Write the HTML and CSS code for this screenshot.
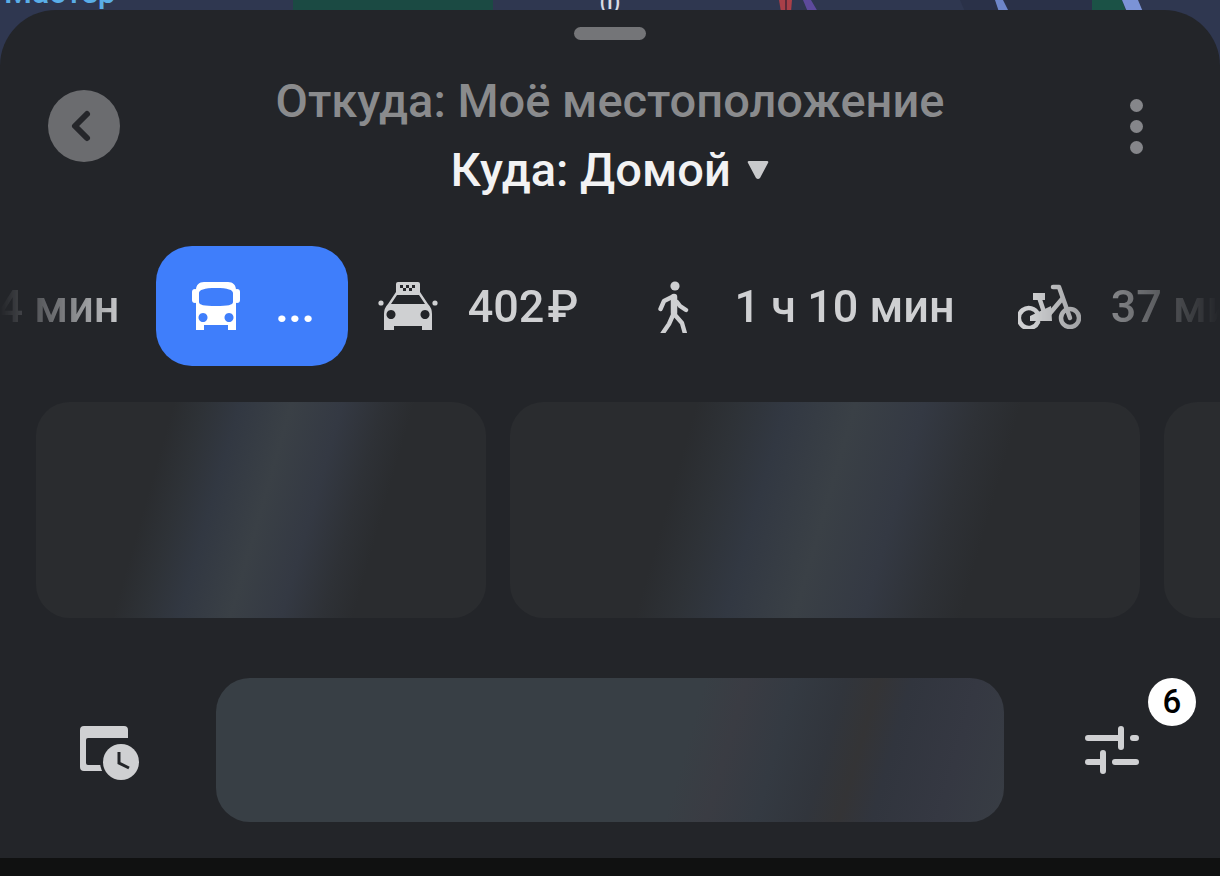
FILE: index.html
```html
<!DOCTYPE html>
<html lang="ru">
<head>
  <meta charset="UTF-8">
  <title>Маршрут</title>
  <link rel="stylesheet" href="styles.css">
</head>
<body>

<!-- кусок карты над шторкой -->
<svg class="map" viewBox="0 0 1220 70" width="1220" height="70">
  <rect width="1220" height="70" fill="#2f3750"/>
  <rect x="293" width="200" height="70" fill="#1b4a43"/>
  <path d="M960 0H1092V70H990Z" fill="#2a3148"/>
  <path d="M1092 0H1122L1126 12V70H1092Z" fill="#1b5246"/>
  <path d="M779 0H792L791 12H781Z" fill="#a83f48"/>
  <rect x="785" width="2" height="12" fill="#5c2a3a"/>
  <path d="M803 0H811L818 12H808Z" fill="#5d4a9c"/>
  <path d="M995 0H1003L1009 12H999Z" fill="#6e86c9"/>
  <path d="M1122 0H1138L1143 12H1127Z" fill="#7b93d6"/>
  <text class="map-label" x="4" y="3">Мастер</text>
  <text class="map-glyph" x="610" y="9">(ı)</text>
</svg>

<div class="sheet">
  <div class="handle"></div>

  <div class="head">
    <button class="back">
      <svg viewBox="0 0 72 72" width="72" height="72"><path d="M39 24 27 36l12 12" fill="none" stroke="#25262a" stroke-width="6" stroke-linecap="round" stroke-linejoin="round"/></svg>
    </button>
    <div class="route">
      <div class="from">Откуда: Моё местоположение</div>
      <div class="to">Куда: Домой
        <svg class="caret" viewBox="0 0 22 20" width="22" height="20"><path d="M2 1h18q2 0 1 2l-8 15q-2 2-4 0L1 3Q0 1 2 1z" fill="#c9cacc"/></svg>
      </div>
    </div>
    <button class="more"><span></span><span></span><span></span></button>
  </div>

  <div class="tabs">
    <div class="tab tab-first"><span>34 мин</span></div>

    <div class="tab active">
      <svg viewBox="0 0 48 48" width="48" height="48" fill="#fff">
        <rect x="0" y="7" width="6" height="14" rx="3"/>
        <rect x="42" y="7" width="6" height="14" rx="3"/>
        <path fill-rule="evenodd" d="M4 8C4 3 7 0 12 0H36C41 0 44 3 44 8V48H36V43H12V48H4ZM7 20V11C7 8 12 6 24 6S41 8 41 11V20C41 23 36 24 24 24S7 23 7 20ZM11 31a4.500 4.500 0 1 0 .01 0ZM37 31a4.500 4.500 0 1 0 .01 0Z"/>
      </svg>
      <span>...</span>
    </div>

    <div class="tab tab-taxi">
      <svg viewBox="0 0 60 48" width="60" height="48" fill="#cfd0d2">
        <path d="M20 0H40Q42 0 42 2V10H18V2Q18 0 20 0Z"/>
        <path fill="#25262a" d="M22 3h3v3h-3zM28 3h3v3h-3zM34 3h3v3h-3zM25 6h3v3h-3zM31 6h3v3h-3z"/>
        <path fill-rule="evenodd" d="M18 10H42L50 22Q54 26 54 32V48H44V44H16V48H6V32Q6 26 10 22ZM19 13 13 22H47L41 13ZM13 28a4.500 4.500 0 1 0 .01 0ZM47 28a4.500 4.500 0 1 0 .01 0Z"/>
        <circle cx="3" cy="21" r="2.600"/>
        <circle cx="57" cy="21" r="2.600"/>
      </svg>
      <span class="price">402 ₽</span>
    </div>

    <div class="tab">
      <svg viewBox="-13 -3 60 54" width="60" height="54" fill="none" stroke="#cfd0d2" stroke-width="4.400" stroke-linecap="round" stroke-linejoin="round">
        <circle cx="17" cy="4" r="4.600" fill="#cfd0d2" stroke="none"/>
        <path stroke-width="6.500" d="M16 15 16 31"/>
        <path d="M14 15 6 19 2.500 27M19 20 22 24 28 28M15 33 11 42 4.500 51.500M17 33 24 41 27 51.500"/>
      </svg>
      <span>1 ч 10 мин</span>
    </div>

    <div class="tab tab-bike">
      <svg viewBox="0 0 63 45" width="63" height="45" fill="none" stroke="#cfd0d2" stroke-width="4.500" stroke-linecap="round" stroke-linejoin="round">
        <path d="M20 30A10 10 0 1 0 20 38"/>
        <circle cx="52" cy="34" r="9"/>
        <path d="M35 3H41L52 34"/>
        <path d="M21 13 28 34 44 15"/>
        <path fill="#cfd0d2" stroke="none" d="M15 9H27V16H15ZM12 32 33 22 34 37H12Z"/>
      </svg>
      <span>37 мин</span>
    </div>
  </div>

  <div class="cards">
    <div class="card card-s"></div>
    <div class="card card-l"></div>
    <div class="card card-s"></div>
  </div>

  <div class="foot">
    <div class="foot-icon history">
      <svg viewBox="0 0 60 54" width="60" height="54">
        <path fill="#cfd0d2" d="M4 0H44Q48 0 48 4V12H8Q6 12 6 14V37Q6 39 8 39H24V45H4Q0 45 0 41V4Q0 0 4 0Z"/>
        <circle cx="41" cy="36" r="21" fill="#232529"/>
        <circle cx="41" cy="36" r="18" fill="#cfd0d2"/>
        <path d="M39 26V37L49 42" fill="none" stroke="#232529" stroke-width="3"/>
      </svg>
    </div>
    <div class="go"></div>
    <div class="foot-icon filter">
      <svg viewBox="0 0 54 48" width="54" height="48" fill="none" stroke="#cfd0d2" stroke-width="6" stroke-linecap="round">
        <path d="M3 12H33M36 3V21M48 12H51M3 36H15M18 27V45M30 36H51"/>
      </svg>
      <div class="badge">6</div>
    </div>
  </div>
</div>

</body>
</html>
```

FILE: styles.css
```css
* {
  box-sizing: border-box;
}
html, body {
  margin: 0;
  height: 876px;
  overflow: hidden;
}
body {
  position: relative;
  background-color: #101111;
  font-family: "Roboto", "Noto Sans", sans-serif;
}
button {
  border: none;
  padding: 0;
  background: none;
}
.map {
  position: absolute;
  top: 0;
  left: 0;
  display: block;
}
.map-label {
  font-size: 32px;
  font-weight: 500;
  fill: #5aaee8;
}
.map-glyph {
  font-size: 22px;
  font-weight: 500;
  fill: #d8dbe4;
  text-anchor: middle;
}
.sheet {
  position: relative;
  margin-top: 10px;
  height: 848px;
  padding-top: 17px;
  background-color: #232529;
  border-radius: 56px 56px 0 0;
}
.handle {
  width: 72px;
  height: 13px;
  margin: 0 auto;
  border-radius: 7px;
  background-color: #747578;
}
.head {
  display: grid;
  grid-template-columns: 72px 1fr 72px;
  margin-top: 26px;
  padding: 0 48px;
}
.back {
  width: 72px;
  height: 72px;
  margin-top: 24px;
  border-radius: 50%;
  background-color: #6b6c6f;
}
.back svg {
  display: block;
}
.route {
  text-align: center;
  font-size: 47px;
  line-height: 69px;
  font-weight: 500;
}
.from {
  color: #8a8b8d;
}
.to {
  color: #f2f2f3;
}
.caret {
  margin-left: 5px;
  vertical-align: 6px;
}
.more {
  display: flex;
  flex-direction: column;
  align-items: center;
  gap: 8px;
  margin-top: 33px;
}
.more span {
  width: 13px;
  height: 13px;
  border-radius: 50%;
  background-color: #85868a;
}
.tabs {
  display: flex;
  gap: 6px;
  height: 120px;
  margin-top: 42px;
  overflow: hidden;
  -webkit-mask-image: linear-gradient(90deg, transparent 0, #000 125px, #000 1030px, transparent 1220px);
  mask-image: linear-gradient(90deg, transparent 0, #000 125px, #000 1030px, transparent 1220px);
}
.tab {
  flex: none;
  display: flex;
  align-items: center;
  gap: 30px;
  padding: 0 30px;
  font-size: 45px;
  font-weight: 500;
  color: #cfd0d2;
  white-space: nowrap;
}
.tab-first {
  margin-left: -58px;
}
.tab-taxi {
  padding-left: 24px;
}
.tab-bike {
  padding-left: 27px;
}
.price {
  word-spacing: -8px;
}
.active {
  gap: 36px;
  padding: 0 33px 0 36px;
  border-radius: 36px;
  background-color: #3f7efb;
  color: #fff;
  font-weight: 700;
}
.cards {
  display: flex;
  gap: 24px;
  margin-top: 36px;
  padding-left: 36px;
  overflow: hidden;
}
.card {
  flex: none;
  height: 216px;
  border-radius: 34px;
  background: linear-gradient(106deg, #2a2c2f 27%, #2e3237 33%, #323842 40%, #3a4046 50%, #343943 60%, #2e3136 68%, #2a2c2f 74%);
}
.card-s {
  width: 450px;
}
.card-l {
  width: 630px;
}
.foot {
  display: grid;
  grid-template-columns: 216px 1fr 216px;
  margin-top: 60px;
}
.foot-icon {
  position: relative;
  display: flex;
  align-items: center;
  justify-content: center;
}
.foot-icon svg {
  display: block;
}
.history svg {
  margin-top: 5px;
  margin-left: 4px;
}
.go {
  height: 144px;
  border-radius: 34px;
  background: linear-gradient(106deg, #383f45 0%, #383f45 59%, #3a3c43 64%, #343a42 70%, #31353c 76%, #343436 80%, #31353e 84%, #353842 92%, #383d44 100%);
}
.badge {
  position: absolute;
  top: 0;
  right: 24px;
  width: 48px;
  height: 48px;
  border-radius: 50%;
  background-color: #fff;
  color: #000;
  font-size: 33px;
  font-weight: 500;
  line-height: 48px;
  text-align: center;
}
```
